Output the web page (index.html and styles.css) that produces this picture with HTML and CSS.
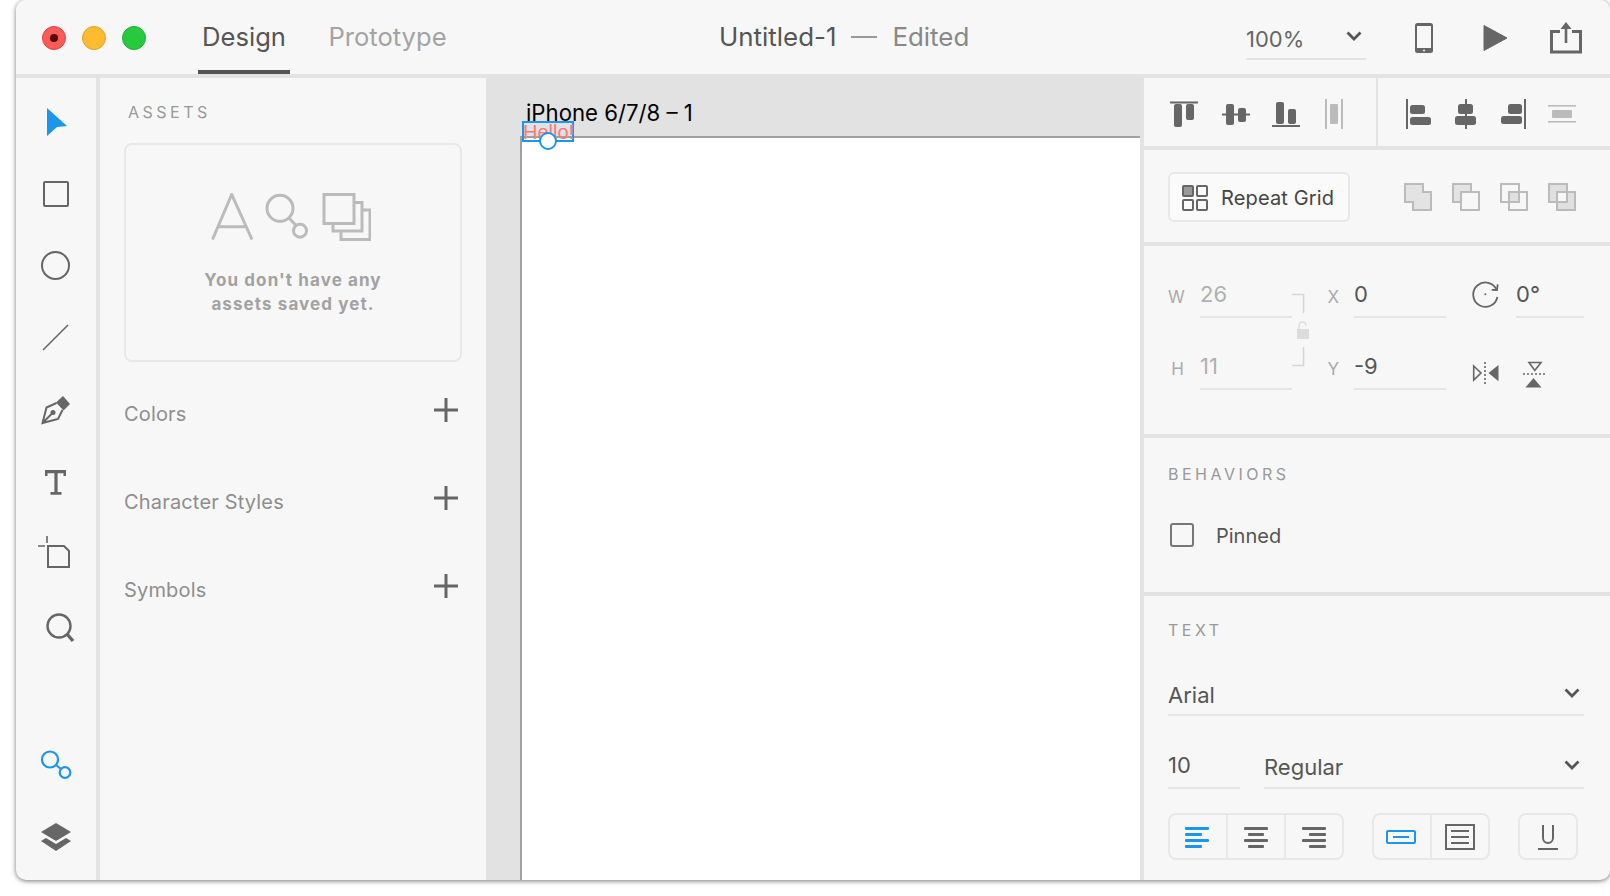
FILE: index.html

```html
<!DOCTYPE html>
<html lang="en">
<head>
  <meta charset="UTF-8" />
  <title>Untitled-1</title>
  <link rel="stylesheet" href="styles.css">
</head>
<body>
  <div class="window">
    <header class="titlebar">
      <div class="lights">
        <span class="light red"><i></i></span>
        <span class="light yellow"></span>
        <span class="light green"></span>
      </div>
      <nav class="tabs">
        <div class="tab active">Design</div>
        <div class="tab">Prototype</div>
      </nav>
      <div class="doc-title">Untitled-1<span class="dash"></span><span class="edited">Edited</span></div>
      <div class="top-right">
        <div class="zoom-field">100%
          <svg width="16" height="10" viewBox="0 0 16 10"><path d="M1.5 1.5 8 8l6.5-6.5" class="chev"/></svg>
        </div>
        <svg class="ico-phone" width="20" height="32" viewBox="0 0 20 32"><rect x="1" y="1" width="18" height="30" rx="2.5" fill="#666"/><rect x="3" y="4" width="14" height="22" fill="#f7f7f7"/><circle cx="10" cy="28.5" r="1" fill="#f7f7f7"/></svg>
        <svg class="ico-play" width="24" height="26" viewBox="0 0 24 26"><path d="M1 0.5 24 13 1 25.5Z" fill="#666" stroke="#666" stroke-linejoin="round"/></svg>
        <svg class="ico-share" width="32" height="32" viewBox="0 0 32 32"><path d="M10 9.500H1.500V30H30.500V9.500H22" fill="none" stroke="#666" stroke-width="3"/><path d="M16 21V4" stroke="#666" stroke-width="2.600"/><path d="M16 0l-5.500 7h11z" fill="#666"/></svg>
      </div>
    </header>

    <div class="main">
      <aside class="tools">
        <div class="tool"><svg viewBox="0 0 40 40"><path d="M11 6 31 24 21 25 11 34Z" fill="#1a96ee"/></svg></div>
        <div class="tool"><svg viewBox="0 0 40 40"><rect x="8" y="8" width="24" height="24" rx="1" class="ln"/></svg></div>
        <div class="tool"><svg viewBox="0 0 40 40"><circle cx="19.500" cy="19.500" r="13.500" class="ln"/></svg></div>
        <div class="tool"><svg viewBox="0 0 40 40"><path d="M7 32 32 7" class="ln thin"/></svg></div>
        <div class="tool"><svg viewBox="0 0 40 40"><path d="M27 6l7 8-6.500 6.500-7.500-8z" fill="#666"/><path d="M20.500 13 10.500 17.500 6.500 33 22 29 26.500 20M6.500 33l9.500-9.500" class="ln"/><circle cx="17" cy="22.500" r="2.500" fill="#666"/></svg></div>
        <div class="tool"><svg viewBox="0 0 40 40"><path d="M9 8h21v6h-2.500V11.200H21.600V30h3.900v2.800h-11V30h3.900V11.200H11.500V14H9z" fill="#666"/></svg></div>
        <div class="tool"><svg viewBox="0 0 40 40"><path d="M12 12H28L33 17V33H12Z" class="ln"/><path d="M11 2V9M2 12H9" class="ln thin"/></svg></div>
        <div class="tool"><svg viewBox="0 0 40 40"><circle cx="23" cy="20" r="11.500" class="ln wide"/><path d="M31 28 37 35" class="ln thick"/></svg></div>
        <div class="tool-gap"></div>
        <div class="tool"><svg viewBox="0 0 40 40"><circle cx="14" cy="14.500" r="8" class="ln blue"/><circle cx="29" cy="27.500" r="5.300" class="ln blue"/><path d="M20 20 25 24" class="ln blue"/></svg></div>
        <div class="tool"><svg viewBox="0 0 40 40"><path d="M20 6 35 15 20 24 5 15Z" fill="#666"/><path d="M5 24 10 21 20 27 30 21 35 24 20 34Z" fill="#666"/></svg></div>
      </aside>

      <section class="assets">
        <div class="caption assets-caption">ASSETS</div>
        <div class="assets-card">
          <svg class="assets-art" width="160" height="48" viewBox="0 0 160 48">
            <path d="M1.500 46.500 20.700 1.500 41 46.500M7.500 33.700H35"/>
            <circle cx="69" cy="15.300" r="13"/>
            <circle cx="89" cy="37.700" r="6.500"/>
            <path d="M78 25 85 32.500"/>
            <rect x="113" y="1.500" width="30" height="29"/>
            <path d="M143 9.500H151V38H122V30.500"/>
            <path d="M151 17H159V46.500H130V38"/>
          </svg>
          <p class="assets-empty">You don't have any<br>assets saved yet.</p>
        </div>
        <div class="asset-row"><span>Colors</span><svg width="24" height="24" viewBox="0 0 24 24"><path d="M12 0V24M0 12H24" class="plus"/></svg></div>
        <div class="asset-row"><span>Character Styles</span><svg width="24" height="24" viewBox="0 0 24 24"><path d="M12 0V24M0 12H24" class="plus"/></svg></div>
        <div class="asset-row"><span>Symbols</span><svg width="24" height="24" viewBox="0 0 24 24"><path d="M12 0V24M0 12H24" class="plus"/></svg></div>
      </section>

      <section class="canvas">
        <div class="artboard-name">iPhone 6/7/8 – 1</div>
        <div class="artboard">
          <div class="selection">Hello!</div>
          <div class="handle"></div>
        </div>
      </section>

      <aside class="inspector">
        <div class="pane align-pane">
          <div class="align-group first">
            <svg viewBox="0 0 32 32"><rect x="2" y="3.500" width="28" height="2"/><rect x="6" y="6" width="8" height="23" rx="2"/><rect x="18" y="6" width="8" height="16" rx="2"/></svg>
            <svg viewBox="0 0 32 32"><rect x="4" y="15.500" width="28" height="2"/><rect x="8" y="6" width="8" height="21" rx="2"/><rect x="20" y="10" width="8" height="14" rx="2"/></svg>
            <svg viewBox="0 0 32 32"><rect x="4" y="27" width="28" height="2"/><rect x="8" y="4" width="8" height="22" rx="2"/><rect x="20" y="11" width="8" height="15" rx="2"/></svg>
            <svg viewBox="0 0 32 32" class="off"><rect x="7" y="1" width="2" height="30"/><rect x="23" y="1" width="2" height="30"/><rect x="12" y="6" width="8" height="20" rx="1"/></svg>
          </div>
          <div class="align-group">
            <svg viewBox="0 0 32 32"><rect x="4" y="1" width="2" height="30"/><rect x="8" y="7" width="15" height="9" rx="2.500"/><rect x="8" y="19" width="21" height="8" rx="2.500"/></svg>
            <svg viewBox="0 0 32 32"><rect x="15" y="1" width="2" height="30"/><rect x="8" y="6" width="15" height="10" rx="2.500"/><rect x="5" y="18" width="21" height="9" rx="2.500"/></svg>
            <svg viewBox="0 0 32 32"><rect x="26" y="1" width="2" height="30"/><rect x="10" y="6" width="14" height="10" rx="2.500"/><rect x="3" y="18" width="21" height="8" rx="2.500"/></svg>
            <svg viewBox="0 0 32 32" class="off"><rect x="2" y="7" width="28" height="1.600"/><rect x="2" y="23" width="28" height="1.600"/><rect x="6" y="12" width="20" height="8" rx="1"/></svg>
          </div>
        </div>

        <div class="pane grid-pane">
          <div class="repeat-btn">
            <svg width="26" height="26" viewBox="0 0 26 26"><rect x="1" y="1" width="10" height="10" rx="1" fill="#999"/><rect x="15" y="1" width="10" height="10" rx="1"/><rect x="1" y="15" width="10" height="10" rx="1"/><rect x="15" y="15" width="10" height="10" rx="1"/></svg>
            Repeat Grid
          </div>
          <div class="bools">
            <svg viewBox="0 0 28 28"><path d="M1 1H19V9H27V27H9V19H1Z" class="bool-fill"/></svg>
            <svg viewBox="0 0 28 28"><rect x="1" y="1" width="18" height="18" class="bool-fill"/><rect x="9" y="9" width="18" height="18" class="bool-clear"/></svg>
            <svg viewBox="0 0 28 28"><rect x="9" y="9" width="10" height="10" fill="#e0e0e0"/><rect x="1" y="1" width="18" height="18" class="bool-line"/><rect x="9" y="9" width="18" height="18" class="bool-line"/></svg>
            <svg viewBox="0 0 28 28"><path d="M1 1H19V9H9V19H1ZM19 9H27V27H9V19H19Z" fill="#e0e0e0"/><rect x="1" y="1" width="18" height="18" class="bool-line"/><rect x="9" y="9" width="18" height="18" class="bool-line"/></svg>
          </div>
        </div>

        <div class="pane transform-pane">
          <span class="f-label">W</span><span class="field muted">26</span>
          <svg class="chain" width="34" height="120" viewBox="0 0 34 120">
            <path d="M0 24.500H11.500V43M11.500 77V95.500H0" fill="none" stroke="#d6d6d6" stroke-width="1.600"/>
            <rect x="5" y="59" width="12" height="10" fill="#dcdcdc"/>
            <path d="M7 59V55.500A3.500 3.500 0 0 1 14 55.500" fill="none" stroke="#dcdcdc" stroke-width="1.600"/>
          </svg>
          <span class="f-label pos">X</span><span class="field">0</span>
          <span class="f-icon"><svg width="28" height="28" viewBox="0 0 28 28"><path d="M25.400 16A12.200 12.200 0 1 1 24.700 9" fill="none" stroke="#666" stroke-width="1.800"/><path d="M19.700 8.800 25 9 25.700 3.300" fill="none" stroke="#666" stroke-width="1.800"/><circle cx="13.300" cy="13.300" r="1" fill="#666"/></svg></span>
          <span class="field">0°</span>

          <span class="f-label">H</span><span class="field muted">11</span>
          <span class="f-label pos">Y</span><span class="field">-9</span>
          <span class="flips">
            <svg width="28" height="24" viewBox="0 0 28 24"><path d="M1.700 5 9 12 1.700 19Z" fill="none" stroke="#666" stroke-width="1.600"/><path d="M13 1V23" stroke="#666" stroke-width="1.600" stroke-dasharray="2 2"/><path d="M26.500 4 16.500 12 26.500 20.300Z" fill="#666"/></svg>
            <svg width="24" height="28" viewBox="0 0 24 28"><path d="M7 1.500H19L12.800 9.500Z" fill="none" stroke="#666" stroke-width="1.600"/><path d="M1 13H23" stroke="#666" stroke-width="1.600" stroke-dasharray="2 2"/><path d="M3.500 26.500H19.500L11.500 17Z" fill="#666"/></svg>
          </span>
        </div>

        <div class="pane behaviors-pane">
          <div class="caption">BEHAVIORS</div>
          <label class="check-row"><span class="checkbox"></span>Pinned</label>
        </div>

        <div class="pane text-pane">
          <div class="caption">TEXT</div>
          <div class="select font-select">Arial
            <svg width="16" height="10" viewBox="0 0 16 10"><path d="M1.500 1.500 8 8l6.500-6.500" class="chev"/></svg>
          </div>
          <div class="size-row">
            <div class="size-field">10</div>
            <div class="select weight-select">Regular
              <svg width="16" height="10" viewBox="0 0 16 10"><path d="M1.500 1.500 8 8l6.500-6.500" class="chev"/></svg>
            </div>
          </div>
          <div class="text-btns">
            <div class="btn-group">
              <div class="btn"><svg viewBox="0 0 24 24" class="on"><rect y="2" width="24" height="3" rx="1"/><rect y="8" width="17" height="3" rx="1"/><rect y="14" width="24" height="3" rx="1"/><rect y="20" width="17" height="3" rx="1"/></svg></div>
              <div class="btn"><svg viewBox="0 0 24 24"><rect y="2" width="24" height="3" rx="1"/><rect x="4" y="8" width="16" height="3" rx="1"/><rect y="14" width="24" height="3" rx="1"/><rect x="4" y="20" width="16" height="3" rx="1"/></svg></div>
              <div class="btn"><svg viewBox="0 0 24 24"><rect y="2" width="24" height="3" rx="1"/><rect x="7" y="8" width="17" height="3" rx="1"/><rect y="14" width="24" height="3" rx="1"/><rect x="7" y="20" width="17" height="3" rx="1"/></svg></div>
            </div>
            <div class="btn-group">
              <div class="btn"><svg viewBox="0 0 30 14" class="wide on"><rect x="1" y="1" width="28" height="12" rx="1" fill="none" stroke="#1a96ee" stroke-width="2"/><rect x="7" y="6" width="16" height="2"/></svg></div>
              <div class="btn"><svg viewBox="0 0 30 26" class="wide"><rect x="1" y="1" width="28" height="24" fill="none" stroke="#666" stroke-width="2"/><rect x="6" y="6" width="18" height="2"/><rect x="6" y="12" width="18" height="2"/><rect x="6" y="18" width="18" height="2"/></svg></div>
            </div>
            <div class="btn-group">
              <div class="btn"><svg viewBox="0 0 24 28" class="tall"><path d="M7 2V15A5 5 0 0 0 17 15V2" fill="none" stroke="#666" stroke-width="2"/><rect x="2" y="25" width="20" height="2"/></svg></div>
            </div>
          </div>
        </div>
      </aside>
    </div>
  </div>
</body>
</html>
```

FILE: styles.css

```css
* {
  box-sizing: border-box;
}
html, body {
  margin: 0;
  height: 896px;
  overflow: hidden;
}
body {
  background-color: #fff;
  font-family: Inter, "Noto Sans", sans-serif;
  padding-left: 16px;
}
.window {
  width: 1594px;
  height: 880px;
  background-color: #f7f7f7;
  border-radius: 10px;
  box-shadow: 0 1px 5px rgba(0, 0, 0, 0.55);
  overflow: hidden;
  display: flex;
  flex-direction: column;
}

/* title bar */
.titlebar {
  height: 78px;
  flex: none;
  display: flex;
  align-items: stretch;
  background-color: #f7f7f7;
  border-bottom: 4px solid #e3e3e3;
  padding-left: 26px;
}
.lights {
  display: flex;
  align-items: center;
  gap: 16px;
  margin-top: 2px;
}
.light {
  width: 24px;
  height: 24px;
  border-radius: 50%;
  display: flex;
  align-items: center;
  justify-content: center;
}
.light i {
  width: 8px;
  height: 8px;
  border-radius: 50%;
  background-color: #4f0a05;
}
.red { background-color: #fc5b57; border: 1px solid #e3433f; }
.yellow { background-color: #fdbb2f; border: 1px solid #e0a128; }
.green { background-color: #27c93f; border: 1px solid #1fb033; }
.tabs {
  display: flex;
  gap: 34px;
  margin-left: 52px;
}
.tab {
  width: 92px;
  justify-content: center;
  display: flex;
  align-items: center;
  padding-bottom: 2px;
  font-size: 25.600px;
  color: #a3a3a3;
}
.tab + .tab {
  width: 127px;
}
.tab.active {
  color: #555;
  box-shadow: inset 0 -4px 0 #555;
}
.doc-title {
  margin-left: 268px;
  display: flex;
  align-items: center;
  padding-bottom: 2px;
  font-size: 25.900px;
  color: #555;
}
.dash {
  width: 26px;
  height: 2px;
  background-color: #999;
  margin: 2px 15px 0;
}
.edited {
  color: #888;
}
.top-right {
  margin-left: auto;
  padding-right: 28px;
  display: flex;
  align-items: center;
}
.zoom-field {
  width: 120px;
  height: 36px;
  margin-top: 10px;
  padding-bottom: 4px;
  border-bottom: 2px solid #e3e3e3;
  font-size: 22px;
  color: #666;
  display: flex;
  align-items: center;
  justify-content: space-between;
  padding-right: 4px;
}
.zoom-field svg {
  margin-top: -6px;
}
.chev {
  fill: none;
  stroke: #555;
  stroke-width: 2.800;
}
.ico-phone { margin-left: 48px; margin-top: 2px; }
.ico-play { margin-left: 49px; margin-top: 2px; }
.ico-share { margin-left: 43px; margin-top: 2px; }

.main {
  flex: 1;
  display: flex;
  min-height: 0;
}

/* tools */
.tools {
  width: 84px;
  flex: none;
  border-right: 4px solid #e3e3e3;
  padding: 8px 0 7px;
  display: flex;
  flex-direction: column;
}
.tool {
  height: 72px;
  flex: none;
  display: flex;
  align-items: center;
  justify-content: center;
}
.tool svg {
  width: 40px;
  height: 40px;
}
.tool-gap {
  flex: 1;
}
.ln {
  fill: none;
  stroke: #666;
  stroke-width: 2;
}
.ln.thin { stroke-width: 1.600; }
.ln.wide { stroke-width: 2.400; }
.ln.thick { stroke-width: 3.400; }
.ln.blue { stroke: #1a96ee; stroke-width: 2.200; }

/* assets */
.assets {
  width: 386px;
  flex: none;
  padding: 0 24px;
}
.caption {
  font-size: 16px;
  letter-spacing: 3.500px;
  color: #999;
  line-height: 20px;
}
.assets-caption {
  margin: 24px 0 0 4px;
}
.assets-card {
  margin-top: 21px;
  height: 219px;
  border: 2px solid #e8e8e8;
  border-radius: 8px;
  padding-top: 48px;
  text-align: center;
}
.assets-art {
  display: block;
  margin: 0 auto 0 85px;
  fill: none;
  stroke: #bbb;
  stroke-width: 3;
}
.assets-empty {
  margin: 27px 0 0;
  font-size: 17px;
  line-height: 24px;
  font-weight: 700;
  letter-spacing: 1.100px;
  color: #a2a2a2;
}
.asset-row {
  height: 88px;
  display: flex;
  align-items: center;
  justify-content: space-between;
  padding-right: 4px;
  font-size: 20px;
  color: #8e8e8e;
  letter-spacing: 0.17px;
}
.asset-row span {
  margin-top: 8px;
}
.assets-card + .asset-row {
  margin-top: 4px;
}
.plus {
  stroke: #666;
  stroke-width: 3;
}

/* canvas */
.canvas {
  flex: 1;
  background-color: #e2e2e2;
  padding-left: 34px;
  display: flex;
  flex-direction: column;
}
.artboard-name {
  font-size: 22.200px;
  line-height: 26px;
  height: 58px;
  padding: 22px 0 0 6px;
  color: #000;
}
.artboard {
  flex: 1;
  position: relative;
  background-color: #fff;
  border-top: 2px solid #a0a0a0;
  border-left: 2px solid #a0a0a0;
}
.selection {
  position: absolute;
  left: 0;
  top: -17px;
  width: 52px;
  height: 21px;
  border: 2px solid #1a96ee;
  font-family: "Liberation Sans", Arial, sans-serif;
  font-size: 20px;
  line-height: 18px;
  text-indent: -1px;
  color: #f77;
  white-space: nowrap;
}
.handle {
  position: absolute;
  left: 17px;
  top: -6px;
  width: 18px;
  height: 18px;
  border-radius: 50%;
  background-color: #fff;
  border: 2px solid #1a96ee;
}

/* inspector */
.inspector {
  width: 470px;
  flex: none;
  border-left: 4px solid #e3e3e3;
  display: flex;
  flex-direction: column;
}
.pane {
  border-bottom: 4px solid #e3e3e3;
  padding-left: 24px;
}
.align-pane {
  height: 72px;
  padding-left: 0;
  display: flex;
}
.align-group {
  display: flex;
  align-items: center;
  gap: 16px;
  padding-left: 24px;
  padding-top: 4px;
}
.align-group.first {
  width: 234px;
  gap: 18px;
  border-right: 2px solid #e3e3e3;
}
.align-group svg {
  width: 32px;
  height: 32px;
  fill: #666;
}
.align-group svg.off {
  fill: #bbb;
}
.grid-pane {
  height: 96px;
  display: flex;
  align-items: center;
}
.repeat-btn {
  width: 182px;
  height: 50px;
  margin-top: 2px;
  padding-top: 1px;
  border: 2px solid #e8e8e8;
  border-radius: 6px;
  background-color: #fafafa;
  display: flex;
  align-items: center;
  gap: 13px;
  padding-left: 12px;
  font-size: 20px;
  letter-spacing: 0.15px;
  color: #444;
  white-space: nowrap;
}
.repeat-btn svg {
  fill: none;
  stroke: #666;
  stroke-width: 2;
  flex: none;
}
.bools {
  display: flex;
  gap: 20px;
  margin-left: 54px;
  padding-top: 2px;
}
.bools svg {
  width: 28px;
  height: 28px;
}
.bool-fill {
  fill: #e3e3e3;
  stroke: #bbb;
  stroke-width: 2;
}
.bool-clear {
  fill: #f7f7f7;
  stroke: #bbb;
  stroke-width: 2;
}
.bool-line {
  fill: none;
  stroke: #bbb;
  stroke-width: 2;
}

.transform-pane {
  height: 192px;
  padding-top: 24px;
  display: grid;
  grid-template-columns: 32px 92px 34px 28px 92px 70px 68px;
  grid-template-rows: 48px 48px;
  row-gap: 24px;
  align-content: start;
}
.f-label {
  width: 16px;
  text-align: right;
  font-size: 17px;
  color: #aaa;
  padding-top: 16px;
  line-height: 22px;
}
.f-label.pos {
  width: 13px;
}
.field {
  font-size: 22px;
  line-height: 26px;
  padding-top: 11px;
  color: #555;
  border-bottom: 2px solid #e6e6e6;
}
.field.muted {
  color: #b0b0b0;
}
.chain {
  grid-row: 1 / span 2;
  grid-column: 3;
}
.f-icon {
  padding: 11px 0 0 26px;
}
.flips {
  grid-column: 6 / span 2;
  display: flex;
  align-items: flex-start;
  padding: 19px 0 0 26px;
  gap: 22px;
}
.behaviors-pane {
  height: 158px;
  padding-top: 26px;
}
.check-row {
  display: flex;
  align-items: center;
  margin-top: 40px;
  margin-left: 2px;
  font-size: 20px;
  color: #555;
}
.checkbox {
  width: 24px;
  height: 24px;
  border: 2px solid #777;
  border-radius: 3px;
  margin-right: 22px;
  margin-top: -2px;
}
.text-pane {
  flex: 1;
  border-bottom: none;
  padding-top: 24px;
}
.select {
  display: flex;
  justify-content: space-between;
  align-items: center;
  font-size: 22px;
  color: #555;
  border-bottom: 2px solid #e6e6e6;
  padding-right: 4px;
  height: 40px;
}
.select svg {
  margin-top: -4px;
}
.font-select {
  width: 416px;
  margin-top: 36px;
  margin-bottom: 31px;
}
.size-row {
  display: flex;
  gap: 24px;
  width: 416px;
}
.size-field {
  width: 72px;
  height: 42px;
  border-bottom: 2px solid #e6e6e6;
  font-size: 22px;
  line-height: 36px;
  color: #555;
}
.weight-select {
  flex: 1;
  height: 42px;
}
.text-btns {
  display: flex;
  gap: 28px;
  margin-top: 24px;
}
.btn-group {
  display: flex;
  height: 47px;
  border: 2px solid #e8e8e8;
  border-radius: 8px;
}
.btn {
  width: 58px;
  display: flex;
  align-items: center;
  justify-content: center;
  border-left: 2px solid #e8e8e8;
}
.btn:first-child {
  border-left: none;
  width: 56px;
  padding-right: 2px;
}
.btn-group:last-child .btn {
  padding-right: 0;
}
.btn svg {
  width: 24px;
  height: 24px;
  fill: #666;
}
.btn svg.on {
  fill: #1a96ee;
}
.btn svg.wide {
  width: 30px;
}
.btn svg.wide.on { height: 14px; }
.btn svg.wide:not(.on) { height: 26px; }
.btn svg.tall {
  width: 24px;
  height: 28px;
}
```
